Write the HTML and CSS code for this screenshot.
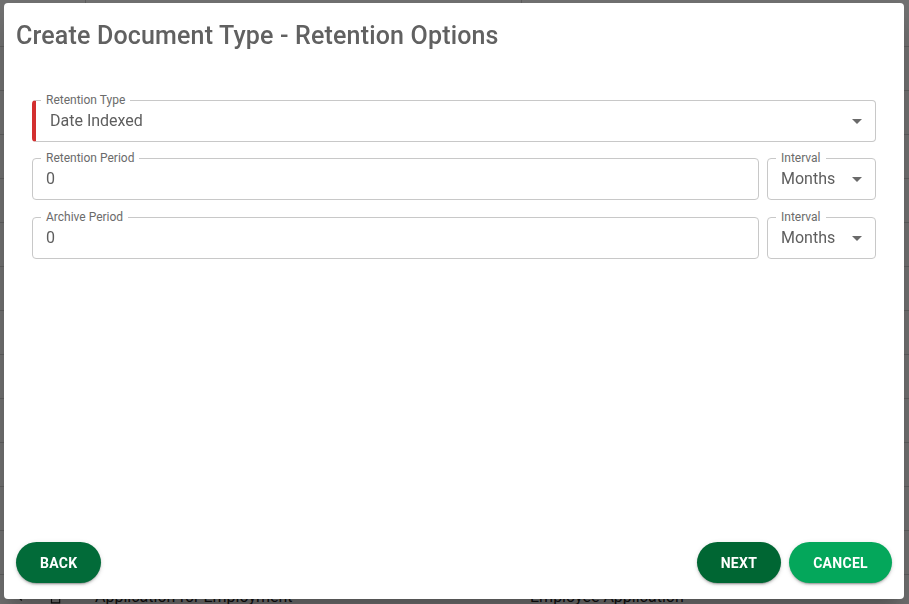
FILE: index.html
```html
<!DOCTYPE html>
<html lang="en">
<head>
<meta charset="utf-8">
<title>Create Document Type - Retention Options</title>
<link rel="stylesheet" href="styles.css">
</head>
<body>
<div class="page">
  <div class="thead">
    <div class="th th-a"></div>
    <div class="th th-b"></div>
    <div class="th th-c"></div>
  </div>
  <div class="tr"></div><div class="tr"></div><div class="tr"></div><div class="tr"></div>
  <div class="tr"></div><div class="tr"></div><div class="tr"></div><div class="tr"></div>
  <div class="tr"></div><div class="tr"></div><div class="tr"></div><div class="tr"></div>
  <div class="tr">
    <div class="td td-a">
      <svg class="bg-icon" width="16" height="16" viewBox="0 0 24 24"><path d="M15.4 7.4 14 6l-6 6 6 6 1.4-1.4L10.8 12z" fill="#222"/></svg>
      <svg class="bg-icon" width="14" height="16" viewBox="0 0 24 24"><path d="M6 2h8l6 6v14H6z" fill="none" stroke="#222" stroke-width="2"/></svg>
    </div>
    <div class="td td-b">Application for Employment</div>
    <div class="td td-c">Employee Application</div>
  </div>
</div>
<div class="overlay"></div>
<div class="dialog" role="dialog">
  <h2 class="dialog-title">Create Document Type - Retention Options</h2>
  <div class="form">
    <div class="field field-required">
      <span class="field-label">Retention Type</span>
      <span class="field-value">Date Indexed</span>
      <svg class="arrow" width="10" height="5" viewBox="0 0 10 5"><path d="M0 0l5 5 5-5z"/></svg>
    </div>
    <div class="form-row">
      <div class="field field-grow">
        <span class="field-label">Retention Period</span>
        <span class="field-value">0</span>
      </div>
      <div class="field field-interval">
        <span class="field-label">Interval</span>
        <span class="field-value">Months</span>
        <svg class="arrow" width="10" height="5" viewBox="0 0 10 5"><path d="M0 0l5 5 5-5z"/></svg>
      </div>
    </div>
    <div class="form-row form-row-last">
      <div class="field field-grow">
        <span class="field-label">Archive Period</span>
        <span class="field-value">0</span>
      </div>
      <div class="field field-interval">
        <span class="field-label">Interval</span>
        <span class="field-value">Months</span>
        <svg class="arrow" width="10" height="5" viewBox="0 0 10 5"><path d="M0 0l5 5 5-5z"/></svg>
      </div>
    </div>
  </div>
  <div class="actions">
    <button class="btn btn-dark">Back</button>
    <div class="actions-right">
      <button class="btn btn-next">Next</button>
      <button class="btn btn-light">Cancel</button>
    </div>
  </div>
</div>
</body>
</html>
```

FILE: styles.css
```css
html, body {
  margin: 0;
  padding: 0;
  height: 100%;
  overflow: hidden;
}
body {
  font-family: Roboto, "Liberation Sans", Arial, sans-serif;
  background: #ffffff;
}

/* background page (under the overlay) */
.page {
  display: flex;
  flex-direction: column;
}
.thead {
  display: flex;
  height: 46px;
  border-bottom: 1px solid #d6d6d6;
}
.th-a { width: 85px; border-right: 1px solid #d0d0d0; }
.th-b { width: 435px; border-right: 1px solid #d0d0d0; }
.th-c { flex: 1; }
.tr {
  display: flex;
  align-items: center;
  height: 43px;
  border-bottom: 1px solid #d6d6d6;
  font-size: 16px;
  color: #222;
  flex: none;
}
.td-a {
  width: 95px;
  display: flex;
  align-items: center;
  gap: 20px;
  padding-left: 12px;
  box-sizing: border-box;
}
.td-b { width: 435px; }
.td-c { flex: 1; }

.overlay {
  position: fixed;
  inset: 0;
  background: rgba(0, 0, 0, 0.56);
}

/* dialog */
.dialog {
  position: fixed;
  left: 4px;
  top: 3px;
  width: 900px;
  height: 596px;
  box-sizing: border-box;
  background: #ffffff;
  border-radius: 4px;
  box-shadow: 0 11px 15px -7px rgba(0,0,0,.2), 0 24px 38px 3px rgba(0,0,0,.14);
  display: flex;
  flex-direction: column;
  padding: 17px 12px 16px;
}
.dialog-title {
  margin: 0;
  font-size: 25px;
  line-height: 32px;
  font-weight: 500;
  color: #616161;
  letter-spacing: 0.17px;
}

.form {
  margin-top: 48px;
  padding: 0 16px;
  display: flex;
  flex-direction: column;
  gap: 16px;
}
.form-row {
  display: flex;
  gap: 8px;
}
.form-row-last { margin-top: 1px; }

.field {
  position: relative;
  height: 42px;
  box-sizing: border-box;
  border: 1px solid #c8c8c8;
  border-radius: 4px;
  display: flex;
  align-items: center;
  padding: 0 13px;
}
.field-required {
  border-left: 4px solid #d32f2f;
  padding-left: 14px;
}
.field-grow { flex: 1; }
.field-interval { width: 109px; }

.field-label {
  position: absolute;
  top: -8px;
  left: 8px;
  padding: 0 5px;
  background: #ffffff;
  font-size: 12px;
  line-height: 14px;
  color: #6b6b6b;
}
.field-required .field-label { left: 5px; }

.field-value {
  flex: 1;
  font-size: 16px;
  color: #5e5e5e;
  line-height: 20px;
}
.arrow {
  fill: #6a6a6a;
  flex: none;
}

/* actions */
.actions {
  margin-top: auto;
  display: flex;
  justify-content: space-between;
  align-items: center;
}
.actions-right {
  display: flex;
  gap: 8px;
}
.btn {
  height: 41px;
  border: none;
  border-radius: 21px;
  padding: 0 24px;
  font-family: Roboto, "Liberation Sans", Arial, sans-serif;
  font-size: 14px;
  font-weight: 700;
  letter-spacing: 0.3px;
  text-transform: uppercase;
  color: #ffffff;
  box-shadow: 0 3px 1px -2px rgba(0,0,0,.2), 0 2px 2px 0 rgba(0,0,0,.14), 0 1px 5px 0 rgba(0,0,0,.12);
  cursor: pointer;
}
.btn-dark { background: #026b39; }
.btn-next { background: #006633; }
.btn-light { background: #04a75b; }
```
